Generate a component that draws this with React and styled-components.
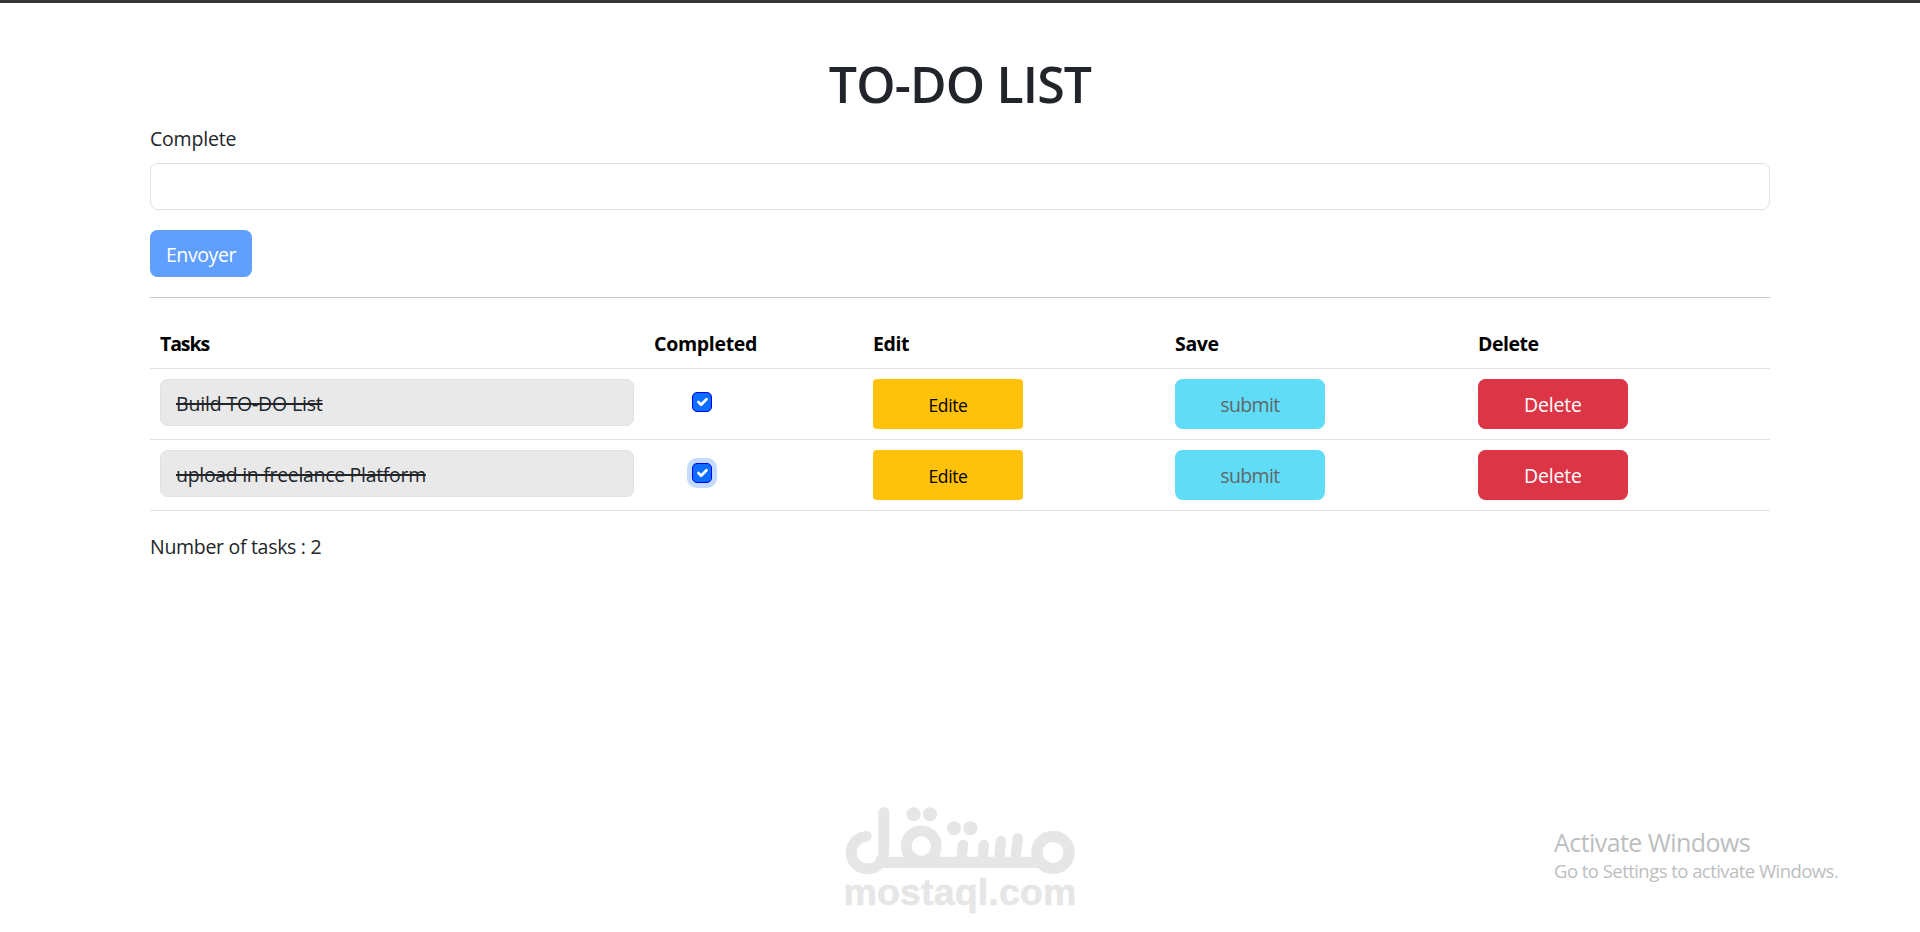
import React from "react";
import styled, { createGlobalStyle } from "styled-components";

const GlobalStyle = createGlobalStyle`
  *, *::before, *::after {
    box-sizing: border-box;
  }
  body {
    margin: 0;
    background: #fff;
    color: #212529;
    font-family: "Open Sans", "Noto Sans", sans-serif;
    font-size: 19.5px;
    line-height: 30px;
    overflow: hidden;
  }
`;

const Page = styled.div`
  position: relative;
  height: 932px;
  border-top: 3px solid #38343a;
  padding-top: 51px;
`;

const Container = styled.main`
  width: 1620px;
  margin: 0 auto;
`;

const Title = styled.h1`
  margin: 0 0 10px;
  font-size: 50px;
  font-weight: 600;
  line-height: 60px;
  letter-spacing: -0.84px;
  text-align: center;
`;

const Label = styled.label`
  display: block;
  margin-bottom: 9px;
  letter-spacing: -0.2px;
`;

const Input = styled.input`
  display: block;
  width: 100%;
  height: 47px;
  padding: 2px 15px 0;
  border: 1px solid #dee2e6;
  border-radius: 7.5px;
  outline: 0;
  background: #fff;
  color: #212529;
  font: inherit;
`;

const TaskInput = styled(Input)`
  background: #e9e9e9;
  letter-spacing: ${({ $tracking }) => $tracking};
  text-decoration: line-through;
  text-decoration-thickness: 2px;
`;

const Button = styled.button`
  display: block;
  width: 150px;
  height: 50px;
  padding: 2px 0 0;
  border: 0;
  border-radius: 7.5px;
  font: inherit;
`;

const SendButton = styled(Button)`
  width: 102px;
  height: 47px;
  margin-top: 20px;
  padding-top: 3px;
  background: #619fff;
  color: #fff;
  letter-spacing: -0.4px;
`;

const EditButton = styled(Button)`
  padding-top: 1px;
  border-radius: 4px;
  background: #ffc10a;
  color: #000;
  font-size: 17.5px;
  letter-spacing: -0.4px;
`;

const SaveButton = styled(Button)`
  background: #61dcf6;
  color: #5f6769;
  letter-spacing: -0.64px;
`;

const DeleteButton = styled(Button)`
  background: #dc3546;
  color: #fff;
  letter-spacing: -0.18px;
`;

const Divider = styled.hr`
  height: 1px;
  margin: 20px 0;
  border: 0;
  background: #c7c8c9;
`;

const Table = styled.table`
  width: 100%;
  margin-bottom: 21px;
  border-spacing: 0;
  table-layout: fixed;
`;

const HeadCell = styled.th`
  width: ${({ $width }) => $width};
  padding: 11px 10px 9px;
  border-bottom: 1px solid #dee2e6;
  color: #000;
  font-weight: 700;
  letter-spacing: ${({ $tracking }) => $tracking};
  text-align: left;
`;

const Cell = styled.td`
  height: 71px;
  padding: 10px;
  border-bottom: 1px solid #dee2e6;
  vertical-align: top;
`;

const Check = styled.span`
  display: block;
  width: 20px;
  height: 20px;
  margin: 13px 0 0 38px;
  border: 1px solid #0000ff;
  border-radius: 5px;
  background: #0d6efd;
  box-shadow: ${({ $focused }) =>
    $focused ? "0 0 0 5px rgba(13, 110, 253, 0.25)" : "none"};

  svg {
    display: block;
  }
`;

const Count = styled.p`
  margin: 0;
  letter-spacing: -0.3px;
`;

const Watermark = styled.svg`
  position: absolute;
  left: 820px;
  bottom: 7px;
`;

const Activation = styled.div`
  position: absolute;
  left: 1554px;
  bottom: 49px;
  color: #bcbec0;
`;

const ActivationTitle = styled.div`
  font-size: 25px;
  line-height: 34px;
  letter-spacing: -0.57px;
`;

const ActivationText = styled.div`
  font-size: 18.5px;
  line-height: 24px;
  letter-spacing: -0.54px;
`;

const columns = [
  { label: "Tasks", width: "494px", tracking: "-1.1px" },
  { label: "Completed", width: "219px", tracking: "-0.3px" },
  { label: "Edit", width: "302px", tracking: "-0.4px" },
  { label: "Save", width: "303px", tracking: "-0.35px" },
  { label: "Delete", width: "302px", tracking: "-0.48px" },
];

const tasks = [
  { name: "Build TO-DO List", tracking: "-0.17px", focused: false },
  { name: "upload in freelance Platform", tracking: "-0.31px", focused: true },
];

function Checkbox({ focused }) {
  return (
    <Check role="checkbox" aria-checked="true" $focused={focused}>
      <svg width="18" height="18" viewBox="0 0 20 20" fill="none">
        <path
          d="m6 10 3 3 6-6"
          stroke="#fff"
          strokeWidth="3"
          strokeLinecap="round"
          strokeLinejoin="round"
        />
      </svg>
    </Check>
  );
}

function MostaqlLogo() {
  return (
    <Watermark width="280" height="135" viewBox="0 0 280 135">
      <g fill="none" stroke="#e6e6e6" strokeWidth="10.8" strokeLinecap="round">
        <path d="M46.4 46.3A16.3 16.3 0 1 0 63.8 62.5V22.5" />
        <path d="M56 72.3H221" strokeWidth="11.2" strokeLinecap="butt" />
        <circle cx="101.3" cy="56" r="15.1" />
        <circle cx="233" cy="62.4" r="16.1" strokeWidth="11.2" />
        <path
          d="M143 55 141.4 70M163.8 55 162.4 70M181 51 179 70M197.8 48.3 195.4 70"
          strokeWidth="10.4"
        />
      </g>
      <g fill="#e6e6e6">
        <circle cx="93.6" cy="24.3" r="7" />
        <circle cx="110" cy="24.3" r="7" />
        <circle cx="134" cy="38.3" r="7" />
        <circle cx="150.4" cy="38.3" r="7" />
      </g>
      <text
        x="23.4"
        y="114.8"
        fill="#e6e6e6"
        stroke="#e6e6e6"
        strokeWidth="0.5"
        strokeLinejoin="round"
        fontFamily="Liberation Sans, Arial, sans-serif"
        fontSize="37.5"
        fontWeight="700"
        textLength="233"
      >
        mostaql.com
      </text>
    </Watermark>
  );
}

function App() {
  return (
    <>
      <GlobalStyle />
      <Page>
        <Container>
          <Title>TO-DO LIST</Title>
          <Label htmlFor="task">Complete</Label>
          <Input id="task" />
          <SendButton>Envoyer</SendButton>
          <Divider />
          <Table>
            <thead>
              <tr>
                {columns.map(({ label, width, tracking }) => (
                  <HeadCell key={label} $width={width} $tracking={tracking}>
                    {label}
                  </HeadCell>
                ))}
              </tr>
            </thead>
            <tbody>
              {tasks.map(({ name, tracking, focused }) => (
                <tr key={name}>
                  <Cell>
                    <TaskInput value={name} $tracking={tracking} readOnly />
                  </Cell>
                  <Cell>
                    <Checkbox focused={focused} />
                  </Cell>
                  <Cell>
                    <EditButton>Edite</EditButton>
                  </Cell>
                  <Cell>
                    <SaveButton>submit</SaveButton>
                  </Cell>
                  <Cell>
                    <DeleteButton>Delete</DeleteButton>
                  </Cell>
                </tr>
              ))}
            </tbody>
          </Table>
          <Count>Number of tasks : {tasks.length}</Count>
        </Container>
        <MostaqlLogo />
        <Activation>
          <ActivationTitle>Activate Windows</ActivationTitle>
          <ActivationText>Go to Settings to activate Windows.</ActivationText>
        </Activation>
      </Page>
    </>
  );
}

export default App;
